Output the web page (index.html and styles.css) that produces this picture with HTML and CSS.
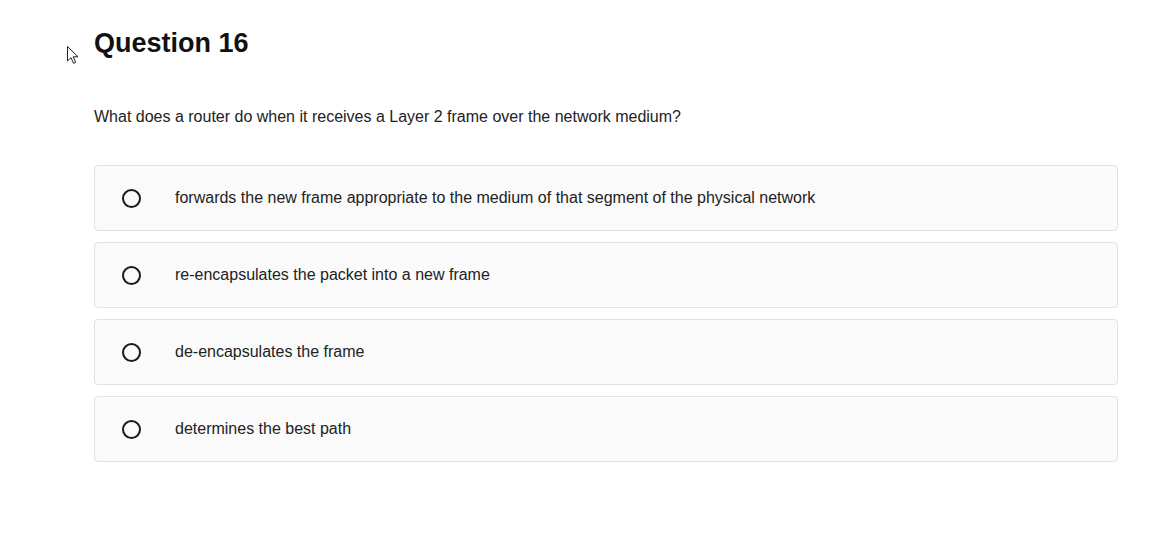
FILE: index.html
```html
<!DOCTYPE html>
<html>
<head>
<meta charset="utf-8">
<link rel="stylesheet" href="styles.css">
</head>
<body>
<svg class="cursor" width="14" height="20" viewBox="0 0 14 20"><path d="M1.5 1.5 L1.5 16 L5 12.7 L7.5 18.3 L9.7 17.4 L7.2 11.8 L12 11.8 Z" fill="#fff" stroke="#222" stroke-width="1" stroke-linejoin="round"/></svg>
<main class="quiz">
  <h1 class="title">Question 16</h1>
  <p class="prompt">What does a router do when it receives a Layer 2 frame over the network medium?</p>
  <div class="options">
    <label class="option"><span class="radio"></span><span class="label">forwards the new frame appropriate to the medium of that segment of the physical network</span></label>
    <label class="option"><span class="radio"></span><span class="label">re-encapsulates the packet into a new frame</span></label>
    <label class="option"><span class="radio"></span><span class="label">de-encapsulates the frame</span></label>
    <label class="option"><span class="radio"></span><span class="label">determines the best path</span></label>
  </div>
</main>
</body>
</html>
```
FILE: styles.css
```css
html, body {
  margin: 0;
  padding: 0;
  background: #ffffff;
  font-family: "Liberation Sans", Arial, sans-serif;
  color: #222;
}
.cursor {
  position: absolute;
  left: 66px;
  top: 45px;
}
.quiz {
  padding: 27px 41px 0 94px;
}
.title {
  margin: 0;
  font-size: 27px;
  line-height: 32px;
  font-weight: bold;
  color: #111;
}
.prompt {
  margin: 49px 0 0 0;
  font-size: 16px;
  line-height: 18px;
  color: #222;
}
.options {
  margin-top: 39px;
  display: flex;
  flex-direction: column;
  gap: 11px;
}
.option {
  display: flex;
  align-items: center;
  height: 64px;
  border: 1px solid #e1e1e8;
  border-radius: 4px;
  background: #fafafa;
  padding-left: 27px;
}
.radio {
  width: 15px;
  height: 15px;
  border: 2px solid #1a1a1a;
  border-radius: 50%;
  flex: none;
}
.label {
  margin-left: 34px;
  font-size: 16px;
  line-height: 18px;
  color: #222;
}
```
